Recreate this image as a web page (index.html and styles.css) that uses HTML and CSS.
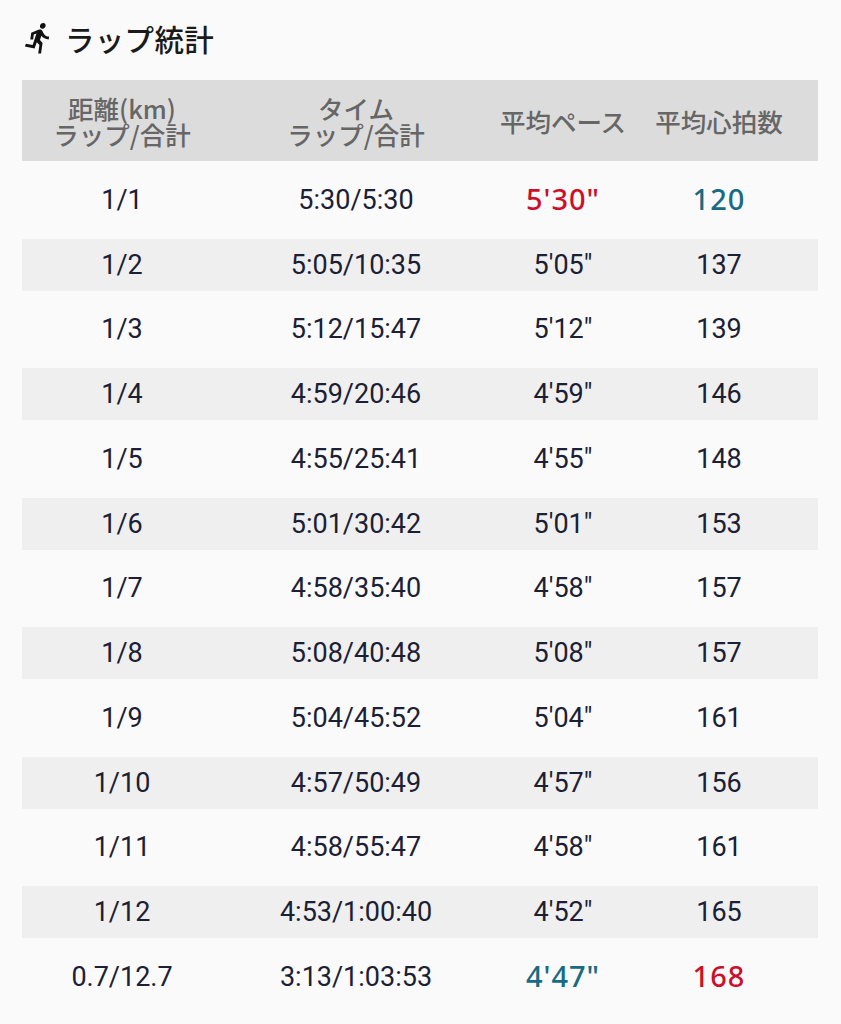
FILE: index.html
```html
<!DOCTYPE html>
<html lang="ja">
<head>
<meta charset="utf-8">
<title>ラップ統計</title>
<link rel="stylesheet" href="styles.css">
</head>
<body>
<div class="page">
  <div class="title">
    <svg class="run-icon" viewBox="0 0 24 24" width="34" height="34"><path d="M13.49 5.48c1.1 0 2-.9 2-2s-.9-2-2-2-2 .9-2 2 .9 2 2 2zm-3.6 13.9l1-4.4 2.1 2v6h2v-7.5l-2.1-2 .6-3c1.3 1.5 3.3 2.5 5.5 2.5v-2c-1.9 0-3.5-1-4.3-2.4l-1-1.6c-.4-.6-1-1-1.7-1-.3 0-.5.1-.8.1l-5.2 2.2v4.7h2v-3.4l1.8-.7-1.6 8.1-4.9-1-.4 2 7 1.4z" fill="#111"/></svg>
    <h1>ラップ統計</h1>
  </div>
  <div class="table">
    <div class="row head">
      <div class="cell"><div class="hl">距離(km)</div><div class="hl">ラップ/合計</div></div>
      <div class="cell"><div class="hl">タイム</div><div class="hl">ラップ/合計</div></div>
      <div class="cell"><div class="hl">平均ペース</div></div>
      <div class="cell"><div class="hl">平均心拍数</div></div>
    </div>
    <div class="row tall">
      <div class="cell">1/1</div><div class="cell">5:30/5:30</div><div class="cell"><span class="hi red">5'30"</span></div><div class="cell"><span class="hi teal">120</span></div>
    </div>
    <div class="row short">
      <div class="cell">1/2</div><div class="cell">5:05/10:35</div><div class="cell">5'05"</div><div class="cell">137</div>
    </div>
    <div class="row tall">
      <div class="cell">1/3</div><div class="cell">5:12/15:47</div><div class="cell">5'12"</div><div class="cell">139</div>
    </div>
    <div class="row short">
      <div class="cell">1/4</div><div class="cell">4:59/20:46</div><div class="cell">4'59"</div><div class="cell">146</div>
    </div>
    <div class="row tall">
      <div class="cell">1/5</div><div class="cell">4:55/25:41</div><div class="cell">4'55"</div><div class="cell">148</div>
    </div>
    <div class="row short">
      <div class="cell">1/6</div><div class="cell">5:01/30:42</div><div class="cell">5'01"</div><div class="cell">153</div>
    </div>
    <div class="row tall">
      <div class="cell">1/7</div><div class="cell">4:58/35:40</div><div class="cell">4'58"</div><div class="cell">157</div>
    </div>
    <div class="row short">
      <div class="cell">1/8</div><div class="cell">5:08/40:48</div><div class="cell">5'08"</div><div class="cell">157</div>
    </div>
    <div class="row tall">
      <div class="cell">1/9</div><div class="cell">5:04/45:52</div><div class="cell">5'04"</div><div class="cell">161</div>
    </div>
    <div class="row short">
      <div class="cell">1/10</div><div class="cell">4:57/50:49</div><div class="cell">4'57"</div><div class="cell">156</div>
    </div>
    <div class="row tall">
      <div class="cell">1/11</div><div class="cell">4:58/55:47</div><div class="cell">4'58"</div><div class="cell">161</div>
    </div>
    <div class="row short">
      <div class="cell">1/12</div><div class="cell">4:53/1:00:40</div><div class="cell">4'52"</div><div class="cell">165</div>
    </div>
    <div class="row tall">
      <div class="cell">0.7/12.7</div><div class="cell">3:13/1:03:53</div><div class="cell"><span class="hi teal">4'47"</span></div><div class="cell"><span class="hi red">168</span></div>
    </div>
  </div>
</div>
</body>
</html>
```

FILE: styles.css
```css
* { box-sizing: border-box; }
html, body { margin: 0; padding: 0; }
body {
  background: #fafafa;
  font-family: Roboto, "Noto Sans", "Noto Sans CJK JP", sans-serif;
  color: #1b2034;
}
.page {
  width: 841px;
  padding: 0 23px 0 22px;
}
.title {
  height: 76px;
  display: flex;
  align-items: center;
  gap: 9px;
  padding-left: 0;
  margin-bottom: 4px;
}
.run-icon { display: block; transform: skewX(-8deg); }
.title h1 {
  margin: 0;
  font-family: "Noto Sans CJK JP", sans-serif;
  font-size: 29.5px;
  font-weight: 500;
  color: #1a1a1a;
  letter-spacing: 0.3px;
}
.table { width: 796px; }
.row {
  display: grid;
  grid-template-columns: 200px 268px 146px 166px 16px;
  align-items: center;
  text-align: center;
}
.cell { white-space: nowrap; }
.head {
  height: 81px;
  background: #dcdcdc;
  font-family: "Noto Sans CJK JP", sans-serif;
  font-size: 25.5px;
  font-weight: 500;
  color: #666;
}
.hl { line-height: 26px; height: 26px; }
.tall, .short {
  font-size: 27px;
  line-height: 30px;
}
.tall { height: 77.5px; background: #fafafa; }
.short { height: 52px; background: #efefef; }
.hi {
  font-family: "Noto Sans", sans-serif;
  font-size: 29px;
  font-weight: 500;
  letter-spacing: 1px;
}
.red { color: #cc0f2b; }
.teal { color: #176b82; }
```
